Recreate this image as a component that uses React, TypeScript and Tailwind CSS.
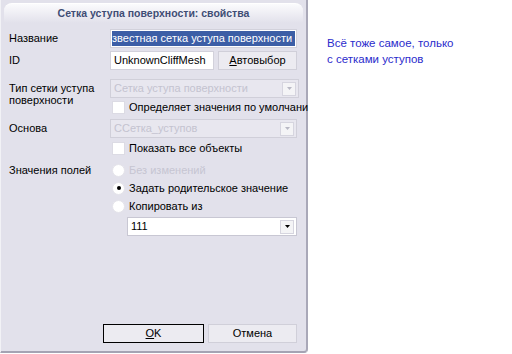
import React from 'react';

const font = "font-['Liberation_Sans',Arial,sans-serif]";

const Arrow: React.FC<{ disabled?: boolean }> = ({ disabled }) => (
  <div className="w-[14px] h-[14px] mr-[2px] flex items-center justify-center bg-[#f4f4f6] border border-[#d6d5df]">
    <svg width="5" height="3" viewBox="0 0 5 3">
      <path d="M0 0h5L2.5 3z" fill={disabled ? '#b8b8c4' : '#000'} />
    </svg>
  </div>
);

const Combo: React.FC<{ text: string; disabled?: boolean; className?: string }> = ({ text, disabled, className }) => (
  <div
    className={`h-[19px] flex items-center justify-between border ${
      disabled ? 'bg-[#e8e7ef] border-[#d0cfd9] text-[#c4c3cf]' : 'bg-white border-[#c8c7d3] text-black'
    } ${className ?? ''}`}
  >
    <span className="pl-[3px] leading-none whitespace-nowrap">{text}</span>
    <Arrow disabled={disabled} />
  </div>
);

const Check: React.FC<{ label: string }> = ({ label }) => (
  <div className="flex items-center gap-[4px] pl-[2px] whitespace-nowrap">
    <div className="w-[13px] h-[13px] shrink-0 bg-white border border-[#dcdbe4]" />
    <span>{label}</span>
  </div>
);

const Radio: React.FC<{ label: string; checked?: boolean; disabled?: boolean }> = ({ label, checked, disabled }) => (
  <div className="flex items-center h-[18px] gap-[4px] pl-[2px] whitespace-nowrap">
    <div className="w-[13px] h-[13px] shrink-0 rounded-full bg-white border border-[#e4e3ea] flex items-center justify-center">
      {checked && <div className="w-[4px] h-[4px] rounded-full bg-black" />}
    </div>
    <span className={disabled ? 'text-[#c6c5d2]' : ''}>{label}</span>
  </div>
);

const Row: React.FC<{ label?: React.ReactNode; className?: string; children: React.ReactNode }> = ({ label, className, children }) => (
  <div className={`flex ${className ?? ''}`}>
    <div className="w-[101px] shrink-0">{label}</div>
    <div className="w-[189px]">{children}</div>
  </div>
);

export default function App() {
  return (
    <div className={`w-[512px] h-[354px] bg-white flex ${font} text-[11px] text-black`}>
      <div className="w-[308px] h-[353px] bg-[#e2e1eb] border-l border-l-[#f2f2f6] border-r-2 border-r-[#a9a8b8] border-b-2 border-b-[#a4a3b3] rounded-br-[4px] flex flex-col pt-[3px]">
        <div className="mx-[3px] h-[20px] rounded-t-[8px] bg-gradient-to-b from-[#fbfbfd] to-[#e2e1eb] border-t border-t-white flex items-center justify-center">
          <span className="font-bold text-[#3f4d75] text-[10.5px]">Сетка уступа поверхности: свойства</span>
        </div>
        <div className="flex flex-col pl-[8px] pr-[9px] mt-[6px]">
          <Row label={<div className="h-[19px] flex items-center">Название</div>}>
            <div className="h-[19px] flex items-center border border-[#d2d1db] bg-white px-[1px]">
              <span className="bg-[#3c5ea6] text-white whitespace-nowrap overflow-hidden leading-[15px] w-full">звестная сетка уступа поверхности</span>
            </div>
          </Row>

          <Row className="mt-[3px]" label={<div className="h-[19px] flex items-center">ID</div>}>
            <div className="flex gap-[4px]">
              <div className="w-[104px] h-[19px] flex items-center bg-white border border-[#d2d1db] pl-[3px]">UnknownCliffMesh</div>
              <div className="flex-1 h-[19px] flex items-center justify-center bg-[#ecebf1] border border-[#d0cfd9]">
                <span><u>А</u>втовыбор</span>
              </div>
            </div>
          </Row>

          <Row
            className="mt-[9px]"
            label={
              <div className="leading-[12px] pt-[3px]">
                Тип сетки уступа
                <br />
                поверхности
              </div>
            }
          >
            <Combo text="Сетка уступа поверхности" disabled />
            <div className="h-[17px] flex items-center mt-[1px]">
              <Check label="Определяет значения по умолчани" />
            </div>
          </Row>

          <Row className="mt-[3px]" label={<div className="h-[19px] flex items-center">Основа</div>}>
            <Combo text="CСетка_уступов" disabled />
            <div className="h-[18px] flex items-center mt-[1px]">
              <Check label="Показать все объекты" />
            </div>
          </Row>

          <Row className="mt-[4px]" label={<div className="h-[18px] flex items-center">Значения полей</div>}>
            <Radio label="Без изменений" disabled />
            <Radio label="Задать родительское значение" checked />
            <Radio label="Копировать из" />
            <Combo text="111" className="ml-[17px] mt-[2px]" />
          </Row>
        </div>
        <div className="flex-1" />
        <div className="flex justify-end gap-[4px] pr-[9px] mb-[8px]">
          <div className="w-[101px] h-[19px] flex items-center justify-center bg-[#ecebf1] border border-black">
            <span><u>O</u>K</span>
          </div>
          <div className="w-[89px] h-[19px] flex items-center justify-center bg-[#ecebf1] border border-[#d0cfd9]">
            Отмена
          </div>
        </div>
      </div>
      <div className="pl-[19px] pt-[35px] text-[11.5px] leading-[16px] text-[#2b2bcc]">
        Всё тоже самое, только
        <br />с сетками уступов
      </div>
    </div>
  );
}
